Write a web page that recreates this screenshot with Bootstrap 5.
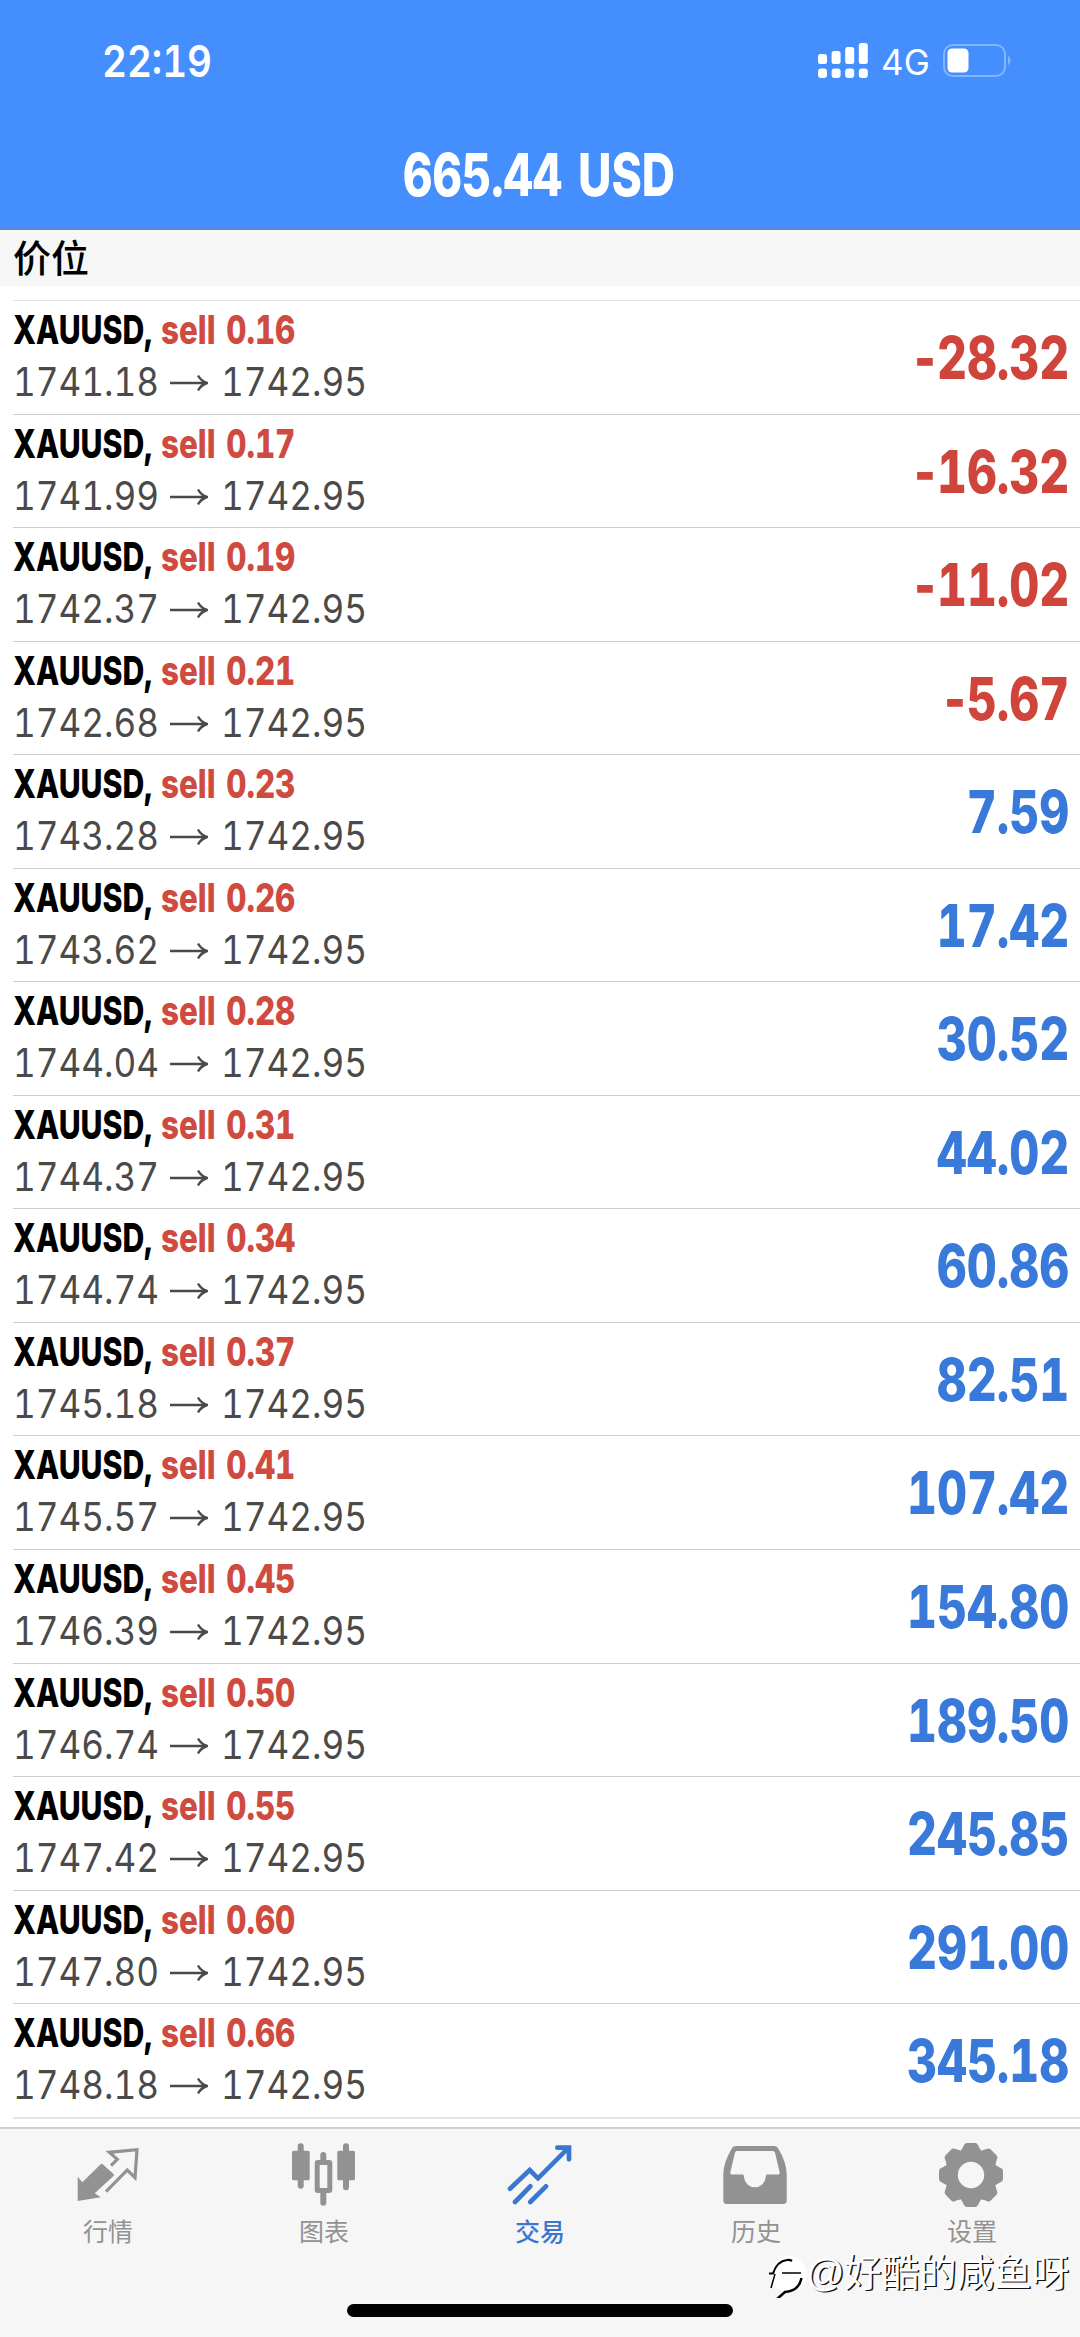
<!DOCTYPE html>
<html lang="zh-CN">
<head>
<meta charset="utf-8">
<meta name="viewport" content="width=device-width, initial-scale=1">
<title>交易</title>
<link href="https://cdn.jsdelivr.net/npm/bootstrap@5.3.0/dist/css/bootstrap.min.css" rel="stylesheet">
<style>
body{width:1080px;height:2337px;overflow:hidden;background:#fff;font-family:Inter,"Noto Sans CJK SC",sans-serif;font-variant-numeric:tabular-nums}
.app-head{height:230px;background:#448efe;color:#fff;border-bottom:2px solid #5a8ad0}
.status{height:80px;padding:39px 68px 0 102px}
.clock{font-size:43.5px;line-height:44px;font-weight:600;transform-origin:left;transform:scaleX(.885);white-space:nowrap}
.net{font-size:35px;line-height:38px;width:48px;margin:4px 13px 0 13px}
.balance{height:94px;margin-top:48px;font-size:59px;line-height:94px;font-weight:800;white-space:nowrap}
.balance span{display:inline-block}
.bal-num{width:161px;transform:scaleX(.772);transform-origin:left}
.bal-cur{width:99px;margin-left:14px;transform:scaleX(.78);transform-origin:left}
.section-title{height:56px;padding-left:13px;background:#f6f6f6;font-size:38px;line-height:56px;font-weight:500;color:#000}
.deals{padding:14px 0 0 13px}
.deal{height:113.56px;border-top:1.5px solid #cfcfcf;padding-right:11px}
.deal:first-child{border-top-color:#e2e2e2}
.deal-end{border-top:2px solid #e4e4e4;height:10px}
.title-line{height:46px;margin-top:6px;font-size:40px;line-height:46px;font-weight:800;white-space:nowrap}
.title-line span{transform-origin:left}
.sym{width:148px;color:#000;font-variant-numeric:normal;transform:scaleX(.755)}
.side{width:140px;color:#cf4a3f;word-spacing:3px;transform:scaleX(.783)}
.price-line{height:58px;font-size:39px;line-height:58px;color:#4a4a4a;white-space:nowrap}
.price-line span{width:157px;transform-origin:left;transform:scaleX(.9)}
.price-line svg{width:38px;height:18px;margin:2px 13px 0 0}
.pl{font-size:59px;font-weight:800;line-height:114px;transform-origin:right;transform:scaleX(.787);white-space:nowrap}
.minus{margin-right:-4px}
.neg{color:#cf453b}.pos{color:#3879da}
.tabs{height:210px;background:#f6f6f6;border-top:2px solid #d0d0d0;color:#929292}
.tab{width:216px;padding-top:8px;font-size:25px;line-height:34px}
.tab svg{width:72px;height:72px;margin-bottom:6px}
.tab.active{color:#3a78d0;font-weight:500}
.home-bar{left:347px;top:2304px;width:386px;height:13px;background:#000;border-radius:7px}
.wm{left:765px;top:2252px;height:46px;color:#fff;font-size:37.5px;line-height:42px;white-space:nowrap;text-shadow:1.5px 1px 0 #111}
.wm svg{margin-left:2px}
.wm-at{width:38px;font-size:38px;margin-left:-2px;font-family:"Liberation Sans",sans-serif}
</style>
</head>
<body>
<header class="app-head">
  <div class="status d-flex align-items-start">
    <div class="clock me-auto">22:19</div>
    <svg width="50" height="38" viewBox="0 0 50 38" class="mt-1" fill="#fff"><rect x="0" y="11" width="9" height="10" rx="2.5"/><rect x="13.6" y="8" width="9" height="13" rx="2.5"/><rect x="27.2" y="4" width="9" height="17" rx="2.5"/><rect x="40.8" y="0" width="9" height="21" rx="2.5"/><rect x="0" y="25.500" width="9" height="9.500" rx="3"/><rect x="13.600" y="25.500" width="9" height="9.500" rx="3"/><rect x="27.200" y="25.500" width="9" height="9.500" rx="3"/><rect x="40.800" y="25.500" width="9" height="9.500" rx="3"/></svg>
    <div class="net">4G</div>
    <svg width="70" height="36" viewBox="0 0 70 36" class="mt-1"><rect x="2" y="2" width="61" height="31" rx="9" fill="none" stroke="#80b7ff" stroke-width="2"/><rect x="5.500" y="5.500" width="21" height="24" rx="4.500" fill="#fff"/><path d="M66 12.500q5 5 0 10z" fill="#80b7ff"/></svg>
  </div>
  <div class="balance d-flex justify-content-center"><span class="bal-num">665.44</span><span class="bal-cur">USD</span></div>
</header>
<div class="section-title">价位</div>
<svg width="0" height="0" class="position-absolute"><defs><path id="arrow" d="M0 9H37M28 1.500Q31 7 37 9Q31 11 28 16.500" fill="none" stroke="#4a4a4a" stroke-width="2.400"/></defs></svg>
<main class="deals">
  <div class="deal d-flex justify-content-between"><div><div class="title-line d-flex"><span class="sym">XAUUSD,</span><span class="side">sell 0.16</span></div><div class="price-line d-flex align-items-center"><span>1741.18</span><svg><use href="#arrow"/></svg><span>1742.95</span></div></div><div class="pl neg"><span class="minus">-</span>28.32</div></div>
  <div class="deal d-flex justify-content-between"><div><div class="title-line d-flex"><span class="sym">XAUUSD,</span><span class="side">sell 0.17</span></div><div class="price-line d-flex align-items-center"><span>1741.99</span><svg><use href="#arrow"/></svg><span>1742.95</span></div></div><div class="pl neg"><span class="minus">-</span>16.32</div></div>
  <div class="deal d-flex justify-content-between"><div><div class="title-line d-flex"><span class="sym">XAUUSD,</span><span class="side">sell 0.19</span></div><div class="price-line d-flex align-items-center"><span>1742.37</span><svg><use href="#arrow"/></svg><span>1742.95</span></div></div><div class="pl neg"><span class="minus">-</span>11.02</div></div>
  <div class="deal d-flex justify-content-between"><div><div class="title-line d-flex"><span class="sym">XAUUSD,</span><span class="side">sell 0.21</span></div><div class="price-line d-flex align-items-center"><span>1742.68</span><svg><use href="#arrow"/></svg><span>1742.95</span></div></div><div class="pl neg"><span class="minus">-</span>5.67</div></div>
  <div class="deal d-flex justify-content-between"><div><div class="title-line d-flex"><span class="sym">XAUUSD,</span><span class="side">sell 0.23</span></div><div class="price-line d-flex align-items-center"><span>1743.28</span><svg><use href="#arrow"/></svg><span>1742.95</span></div></div><div class="pl pos">7.59</div></div>
  <div class="deal d-flex justify-content-between"><div><div class="title-line d-flex"><span class="sym">XAUUSD,</span><span class="side">sell 0.26</span></div><div class="price-line d-flex align-items-center"><span>1743.62</span><svg><use href="#arrow"/></svg><span>1742.95</span></div></div><div class="pl pos">17.42</div></div>
  <div class="deal d-flex justify-content-between"><div><div class="title-line d-flex"><span class="sym">XAUUSD,</span><span class="side">sell 0.28</span></div><div class="price-line d-flex align-items-center"><span>1744.04</span><svg><use href="#arrow"/></svg><span>1742.95</span></div></div><div class="pl pos">30.52</div></div>
  <div class="deal d-flex justify-content-between"><div><div class="title-line d-flex"><span class="sym">XAUUSD,</span><span class="side">sell 0.31</span></div><div class="price-line d-flex align-items-center"><span>1744.37</span><svg><use href="#arrow"/></svg><span>1742.95</span></div></div><div class="pl pos">44.02</div></div>
  <div class="deal d-flex justify-content-between"><div><div class="title-line d-flex"><span class="sym">XAUUSD,</span><span class="side">sell 0.34</span></div><div class="price-line d-flex align-items-center"><span>1744.74</span><svg><use href="#arrow"/></svg><span>1742.95</span></div></div><div class="pl pos">60.86</div></div>
  <div class="deal d-flex justify-content-between"><div><div class="title-line d-flex"><span class="sym">XAUUSD,</span><span class="side">sell 0.37</span></div><div class="price-line d-flex align-items-center"><span>1745.18</span><svg><use href="#arrow"/></svg><span>1742.95</span></div></div><div class="pl pos">82.51</div></div>
  <div class="deal d-flex justify-content-between"><div><div class="title-line d-flex"><span class="sym">XAUUSD,</span><span class="side">sell 0.41</span></div><div class="price-line d-flex align-items-center"><span>1745.57</span><svg><use href="#arrow"/></svg><span>1742.95</span></div></div><div class="pl pos">107.42</div></div>
  <div class="deal d-flex justify-content-between"><div><div class="title-line d-flex"><span class="sym">XAUUSD,</span><span class="side">sell 0.45</span></div><div class="price-line d-flex align-items-center"><span>1746.39</span><svg><use href="#arrow"/></svg><span>1742.95</span></div></div><div class="pl pos">154.80</div></div>
  <div class="deal d-flex justify-content-between"><div><div class="title-line d-flex"><span class="sym">XAUUSD,</span><span class="side">sell 0.50</span></div><div class="price-line d-flex align-items-center"><span>1746.74</span><svg><use href="#arrow"/></svg><span>1742.95</span></div></div><div class="pl pos">189.50</div></div>
  <div class="deal d-flex justify-content-between"><div><div class="title-line d-flex"><span class="sym">XAUUSD,</span><span class="side">sell 0.55</span></div><div class="price-line d-flex align-items-center"><span>1747.42</span><svg><use href="#arrow"/></svg><span>1742.95</span></div></div><div class="pl pos">245.85</div></div>
  <div class="deal d-flex justify-content-between"><div><div class="title-line d-flex"><span class="sym">XAUUSD,</span><span class="side">sell 0.60</span></div><div class="price-line d-flex align-items-center"><span>1747.80</span><svg><use href="#arrow"/></svg><span>1742.95</span></div></div><div class="pl pos">291.00</div></div>
  <div class="deal d-flex justify-content-between"><div><div class="title-line d-flex"><span class="sym">XAUUSD,</span><span class="side">sell 0.66</span></div><div class="price-line d-flex align-items-center"><span>1748.18</span><svg><use href="#arrow"/></svg><span>1742.95</span></div></div><div class="pl pos">345.18</div></div>
  <div class="deal-end"></div>
</main>
<nav class="tabs d-flex">
  <div class="tab d-flex flex-column align-items-center"><svg viewBox="0 0 72 72"><path d="M5.700 39.700L10.300 45.300L28.500 27.500Q29.700 26.200 31 27.500L41.500 37Q42.500 38 41.500 39L22.700 56.300L28.700 60.300L5.700 64z" fill="currentColor"/><path d="M39 28.700L45.300 22.300L37.300 15.300L65 12.700L63 40.700L55.300 33L34 54.700" fill="none" stroke="currentColor" stroke-width="3.200"/></svg>行情</div>
  <div class="tab d-flex flex-column align-items-center"><svg viewBox="0 0 72 72"><g fill="currentColor"><rect x="4" y="13.700" width="17.700" height="29.500" rx="1.500"/><rect x="49.300" y="13.700" width="17.700" height="29.500" rx="1.500"/></g><g stroke="currentColor" stroke-width="6" stroke-linecap="round" fill="none"><path d="M12.700 9.300V48.700M58 9.300V50.300M35.300 18V24M35.300 55V65.700"/></g><rect x="29.200" y="25.400" width="12.600" height="28.100" rx=".5" fill="none" stroke="currentColor" stroke-width="5"/></svg>图表</div>
  <div class="tab active d-flex flex-column align-items-center"><svg viewBox="0 0 72 72"><path d="M6 51.700L25.700 33L34 41.300L64.700 10.700M53.300 10.700H65V22.300M11 65L26.300 49.300M26.300 65L42 49.300" fill="none" stroke="currentColor" stroke-width="4.700" stroke-linecap="round" stroke-linejoin="miter"/></svg>交易</div>
  <div class="tab d-flex flex-column align-items-center"><svg viewBox="0 0 72 72"><path fill="currentColor" fill-rule="evenodd" d="M16 9H54Q57 9 58.500 12Q66.700 26 66.700 37V63.500Q66.700 67 63.200 67H6.800Q3.300 67 3.300 63.500V37Q3.300 26 11.500 12Q13 9 16 9ZM17 14Q15.500 14 15 15.500L10.300 35.500Q10 37.500 11.800 37.500H22.500Q24 37.500 24 40.500A10.900 10.900 0 0 0 45.700 40.500Q45.700 37.500 47.200 37.500H58.300Q60 37.500 59.700 35.500L55 15.500Q54.500 14 53 14Z"/></svg>历史</div>
  <div class="tab d-flex flex-column align-items-center"><svg viewBox="0 0 72 72"><defs><path id="tooth" d="M-12 -20L-9.500 -25.500Q-8.500 -26.500 -7 -30Q-6.200 -32 -4 -32H4Q6.200 -32 7 -30Q8.500 -26.500 9.500 -25.500L12 -20z"/></defs><g transform="translate(35 38)" fill="currentColor"><circle r="25"/><use href="#tooth"/><use href="#tooth" transform="rotate(45)"/><use href="#tooth" transform="rotate(90)"/><use href="#tooth" transform="rotate(135)"/><use href="#tooth" transform="rotate(180)"/><use href="#tooth" transform="rotate(225)"/><use href="#tooth" transform="rotate(270)"/><use href="#tooth" transform="rotate(315)"/><circle r="13.200" fill="#f6f6f6"/></g></svg>设置</div>
</nav>
<div class="home-bar position-absolute"></div>
<div class="wm position-absolute d-flex">
  <svg width="41" height="46" viewBox="0 0 41 46"><circle cx="22" cy="22" r="18" fill="#fff"/><g fill="none" stroke="#000"><path d="M2 21.500H6Q10 9 20 8Q23 7.500 25 9" stroke-width="2.200"/><path d="M15 21H34M8 22L4 36" stroke-width="1.500"/><path d="M34.500 26Q32 39 18 40L10 47" stroke-width="2.500"/></g></svg>
  <span class="wm-at">@</span><span>好酷的咸鱼呀</span>
</div>
<script src="https://cdn.jsdelivr.net/npm/bootstrap@5.3.0/dist/js/bootstrap.bundle.min.js"></script>
</body>
</html>
